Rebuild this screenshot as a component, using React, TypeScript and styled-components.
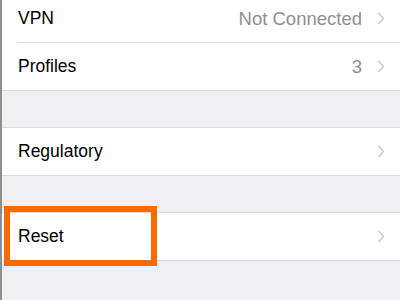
import styled, { createGlobalStyle } from "styled-components";

const GlobalStyle = createGlobalStyle`
  html, body {
    margin: 0;
    padding: 0;
    background: #efeff4;
    font-family: "Liberation Sans", Arial, sans-serif;
    -webkit-font-smoothing: antialiased;
  }
`;

const Screen = styled.div`
  width: 400px;
  height: 300px;
  overflow: hidden;
  background: #efeff4;
  border-left: 2px solid #8e8e8e;
  box-sizing: border-box;
`;

const Group = styled.div<{ $first?: boolean }>`
  background: #fff;
  border-top: ${(p) => (p.$first ? "none" : "1px solid #d9d9de")};
  border-bottom: 1px solid #d9d9de;
  margin-top: ${(p) => (p.$first ? "-5px" : "36px")};
`;

const Row = styled.div`
  height: 47px;
  display: flex;
  align-items: center;
  padding: 0 15px 0 16px;
  position: relative;
`;

const Divider = styled.div`
  height: 1px;
  margin-left: 16px;
  background: #dcdce0;
`;

const Label = styled.span`
  flex: 1;
  font-size: 17.5px;
  color: #000;
`;

const Value = styled.span`
  font-size: 18.5px;
  color: #8e8e93;
  margin-right: 15px;
`;

const Highlight = styled.div`
  position: absolute;
  left: 2px;
  top: -7px;
  width: 153px;
  height: 60px;
  border: 6px solid #ff6a00;
  box-sizing: border-box;
  pointer-events: none;
`;

const Chevron = () => (
  <svg width="8" height="13" viewBox="0 0 8 13">
    <path d="M1.5 1l5 5.5-5 5.5" fill="none" stroke="#c7c7cc" strokeWidth="1.4" />
  </svg>
);

interface ItemProps {
  label: string;
  value?: string;
  highlighted?: boolean;
}

const Item = ({ label, value, highlighted }: ItemProps) => (
  <Row>
    <Label>{label}</Label>
    {value && <Value>{value}</Value>}
    <Chevron />
    {highlighted && <Highlight />}
  </Row>
);

export default function App() {
  return (
    <>
      <GlobalStyle />
      <Screen>
        <Group $first>
          <Item label="VPN" value="Not Connected" />
          <Divider />
          <Item label="Profiles" value="3" />
        </Group>
        <Group>
          <Item label="Regulatory" />
        </Group>
        <Group>
          <Item label="Reset" highlighted />
        </Group>
      </Screen>
    </>
  );
}
